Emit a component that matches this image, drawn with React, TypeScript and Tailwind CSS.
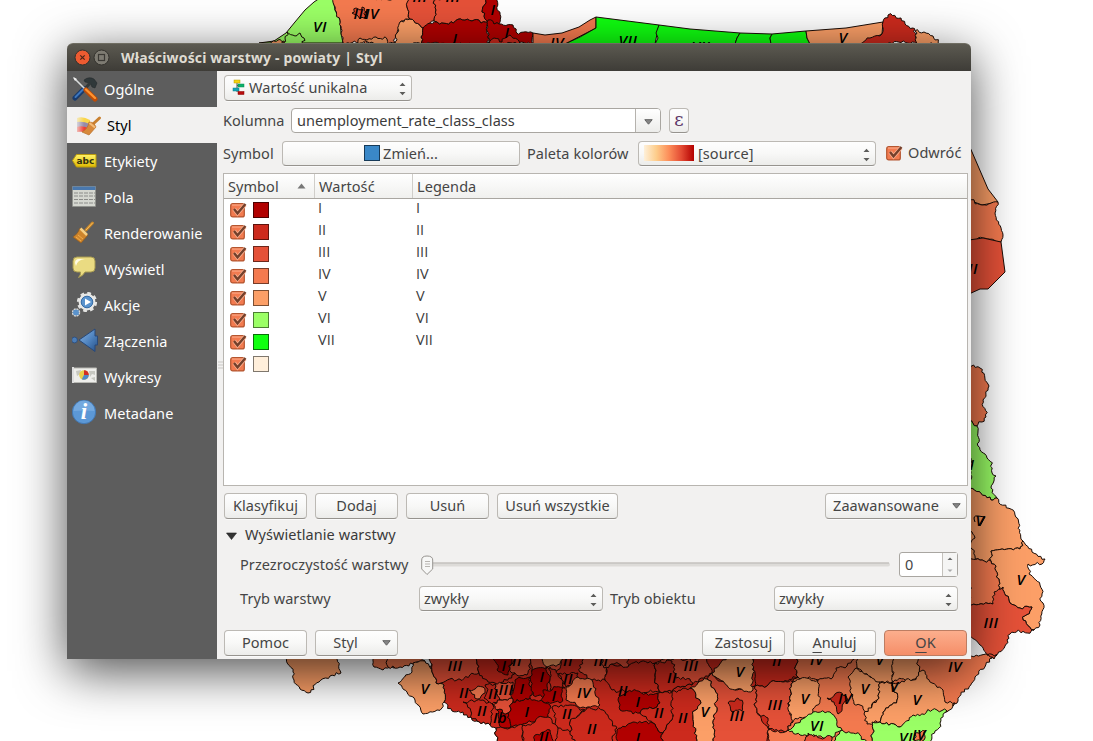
import React from "react";

type Pt = [number, number];

const C = {
  I: "#b10000",
  II: "#cc2a1d",
  III: "#e55138",
  IV: "#f47a4f",
  V: "#fc9f67",
  VI: "#9bff66",
  VII: "#0fff0f",
};
type Cls = keyof typeof C;

// [class, outline, smooth edges]
const regions: [Cls, string, boolean?][] = [
  ["VI", "259,43 274,41 286,33 295,22 305,10 314,2 320,-2 333,-2 335,10 340,20 341,33 343,43", true],
  ["V", "270,44 278,40 284,41 287,44"],
  ["VI", "284,46 287,32 295,36 300,33 304,38 302,46"],
  ["IV", "333,-2 411,-2 407,7 410,19 400,22 395,43 343,43 341,33 340,20 335,10"],
  ["III", "352,13 356,8 360,10 362,7 366,12 364,18 358,16"],
  ["V", "358,44 360,38 367,40 376,37 387,39 388,44"],
  ["V", "397,33 401,21 410,19 414,21 423,28 421,44 395,44"],
  ["III", "410,-2 433,-2 436,10 434,21 423,28 414,21 410,19 407,7"],
  ["III", "433,-2 487,-2 482,12 488,22 472,21 437,22 434,21 436,10"],
  ["I", "423,28 430,23 437,22 472,21 488,22 488,44 421,44"],
  ["I", "487,-2 498,-2 499,24 488,22 482,12"],
  ["I", "488,20 499,24 513,25 516,32 533,33 533,44 488,44"],
  ["II", "489,44 494,38 502,42 510,35 519,41 520,44"],
  ["IV", "533,33 545,35 562,33 579,27 590,20 596,17 596,28 565,44 533,44", true],
  ["VII", "565,44 580,37 596,28 596,17 659,25 657,34 655,44", true],
  ["VII", "659,25 690,29 740,33 737,38 735,44 655,44 658,38 656,33", true],
  ["VII", "740,33 772,34 770,38 771,44 735,44 737,38", true],
  ["VII", "772,34 806,31 807,38 810,44 771,44 770,38", true],
  ["V", "806,31 846,28 883,22 882,34 862,44 810,44 807,38", true],
  ["II", "883,22 888,15 901,18 905,24 915,29 917,44 860,44 870,38 882,34"],
  ["V", "915,31 924,32 933,36 940,44 917,44"],

  ["V", "969,145 988,189 998,202 982,205 969,200", true],
  ["IV", "969,200 982,205 998,202 995,213 1003,235 1001,242 983,238 969,240"],
  ["III", "969,240 983,238 1001,242 1005,272 988,289 980,289 969,294", true],
  ["IV", "969,364 980,368 989,386 983,400 986,417 977,426 969,420"],
  ["VI", "969,420 977,426 978,431 978,446 987,458 996,476 991,488 997,498 991,500 969,486"],
  ["V", "969,486 991,500 997,498 1015,515 1023,541 1020,549 991,551 991,561 969,559"],
  ["V", "965,530 972,532 975,538 971,542 972,549 978,560 965,560"],
  ["V", "1023,541 1032,552 1045,559 1042,564 1028,564 1029,574 1040,585 1043,603 1040,625 1034,630 1023,620 1032,607 1020,608 1010,603 1003,587 999,590 996,566 991,561 991,551 1020,549"],
  ["IV", "969,559 991,561 996,566 999,590 993,604 969,604"],
  ["III", "969,604 993,604 994,592 1003,587 1010,603 1020,608 1032,607 1023,620 1034,630 1010,634 1005,646 992,658 980,645 969,635"],

  ["V", "284,655 335,655 341,673 330,676 319,682 308,693 300,689 294,680 293,672"],
  ["IV", "372,655 408,655 405,666 390,667 383,670 374,667"],
  ["II", "432,655 610,655 795,655 798,677 793,682 788,703 793,722 785,732 770,745 497,745 496,728 490,725 477,721 472,720 463,712 452,711 444,702 444,685 436,683 432,672"],
  ["IV", "385,655 420,655 425,661 413,664 400,667 388,667"],
  ["V", "412,672 413,663 425,661 432,672 436,683 444,685 444,702 442,708 437,710 423,714 415,700 407,692 398,683"],
  ["III", "430,655 477,655 479,673 457,680 436,683 432,672"],
  ["II", "479,673 477,655 526,655 520,670 512,675 500,685 488,682"],
  ["I", "495,655 512,655 508,675 497,670"],
  ["III", "512,655 533,655 527,675 519,676 512,673"],
  ["IV", "469,690 483,687 485,693 477,699 472,694"],
  ["II", "485,685 495,684 500,700 492,704 484,698 487,692"],
  ["III", "495,684 513,682 512,698 500,700"],
  ["II", "463,702 483,700 493,705 490,725 477,721"],
  ["III", "493,705 500,700 512,698 513,702 508,713 497,710"],
  ["I", "497,710 508,713 510,728 502,728"],
  ["I", "515,680 530,677 532,695 530,698 513,702 512,698"],
  ["III", "530,655 565,655 556,672 547,667 532,672"],
  ["V", "540,655 565,655 560,664 547,667"],
  ["I", "532,670 547,667 550,680 545,697 533,695 530,677"],
  ["II", "550,667 558,674 565,688 550,690 550,680"],
  ["I", "543,690 563,687 560,703 543,702"],
  ["I", "513,702 530,698 543,702 550,705 548,717 527,723 510,728 508,713"],
  ["II", "558,674 578,673 578,680 566,687"],
  ["III", "583,655 608,655 605,680 592,680 580,672"],
  ["IV", "566,687 578,677 592,680 600,705 583,707 566,700"],
  ["II", "552,707 570,705 585,710 570,722 570,732 558,728"],
  ["II", "570,722 587,708 603,710 617,728 610,745 575,745 570,732"],
  ["II", "496,728 510,728 523,725 522,745 497,745"],
  ["II", "523,725 548,717 558,728 556,745 523,745"],
  ["I", "535,735 550,730 552,745 533,745"],
  ["II", "605,680 608,664 655,663 655,680 660,692 627,692 612,690"],
  ["III", "600,655 628,655 628,667 614,664 604,668"],
  ["III", "655,663 707,655 712,673 692,685 660,692 655,680"],
  ["II", "655,663 672,661 676,678 690,679 692,685 660,692 655,680"],
  ["I", "618,700 627,692 658,693 660,703 640,713 620,710"],
  ["II", "640,713 660,703 658,693 672,692 677,700 672,720 663,733 653,723"],
  ["II", "672,692 690,688 700,700 693,717 697,745 662,745 663,733 672,720"],
  ["I", "617,730 633,722 653,723 663,733 662,745 617,745"],
  ["III", "707,679 712,673 735,690 755,686 757,713 768,728 767,745 710,745 717,710 715,690"],
  ["V", "690,688 707,679 715,690 717,710 710,745 697,745 693,717 700,700"],
  ["V", "712,673 728,655 753,655 753,690 735,690 717,678"],
  ["II", "728,703 738,698 743,703 742,711 731,711"],
  ["II", "754,655 795,655 798,677 783,682 755,686"],
  ["III", "755,686 783,682 793,682 788,703 793,722 785,732 768,728 768,718 757,713"],
  ["IV", "795,655 990,655 992,658 975,677 958,701 948,711 900,727 872,722 873,745 768,745 768,730 785,732 793,722 788,703 793,682 798,677"],
  ["IV", "798,677 818,680 833,677 836,668 847,666 857,655 795,655"],
  ["V", "793,682 800,679 818,680 820,700 813,712 792,723 788,703"],
  ["V", "848,677 857,668 880,683 877,700 867,715 860,705 854,704"],
  ["V", "857,655 895,655 892,683 878,682 857,668"],
  ["V", "895,655 920,655 917,678 893,682 892,668"],
  ["V", "880,683 893,683 897,700 883,712 880,722 867,724 864,714 877,700"],
  ["V", "880,722 883,712 897,700 893,683 913,680 923,670 932,683 943,690 945,702 955,703 948,711 927,716 900,727"],
  ["II", "827,698 842,693 848,700 838,714 834,702"],
  ["VI", "788,730 813,712 830,712 842,730 830,737 800,735"],
  ["III", "803,745 808,733 820,738 832,737 830,745"],
  ["VI", "830,745 842,730 860,735 868,745"],
  ["VI", "872,722 880,722 900,727 913,715 937,710 947,711 935,731 929,745 873,745"],
  ["IV", "915,734 925,731 924,740 914,741"],
  ["III", "987,655 997,655 994,659 990,657"],
];

const labels: [string, number, number][] = [
  ["VI", 320, 27], ["III", 361, 14], ["IV", 372, 14], ["III", 420, -3], ["III", 453, -3], ["I", 455, 39], ["I", 493, 10], ["I", 507, 33],
  ["IV", 557, 43], ["VII", 628, 41], ["VII", 701, 47], ["V", 843, 38], ["II", 973, 269], ["I", 972, 465], ["V", 980, 521],
  ["V", 1021, 580], ["III", 991, 623], ["IV", 955, 667], ["V", 425, 689], ["III", 455, 666], ["I", 504, 666], ["II", 517, 661], ["II", 464, 693],
  ["II", 493, 694], ["III", 506, 690], ["II", 482, 711], ["Ib", 500, 718], ["I", 522, 689], ["I", 542, 677], ["I", 554, 696], ["I", 527, 712],
  ["II", 568, 679], ["IV", 584, 693], ["III", 601, 661], ["II", 567, 714], ["II", 592, 729], ["II", 544, 737], ["II", 623, 691], ["I", 638, 702],
  ["II", 659, 713], ["II", 683, 718], ["I", 638, 738], ["III", 691, 666], ["II", 672, 678], ["V", 740, 672], ["V", 705, 712], ["III", 737, 716],
  ["III", 775, 705], ["II", 777, 661], ["IV", 817, 660], ["V", 805, 699], ["IV", 845, 699], ["V", 865, 689], ["V", 880, 660], ["V", 894, 687],
  ["V", 917, 700], ["VI", 817, 726], ["VI", 906, 738], ["IV", 919, 735], ["II", 568, 661],
];

function hash(n: number) {
  const s = Math.sin(n * 12.9898) * 43758.5453;
  return s - Math.floor(s);
}

// Roughens an edge; the result is the same whichever end it starts from.
function edge(a: Pt, b: Pt): Pt[] {
  const flip = a[0] > b[0] || (a[0] === b[0] && a[1] > b[1]);
  const [p, q] = flip ? [b, a] : [a, b];
  const dx = q[0] - p[0];
  const dy = q[1] - p[1];
  const len = Math.hypot(dx, dy);
  const seed = p[0] * 3.1 + p[1] * 7.7 + q[0] * 1.3 + q[1] * 5.9;
  const n = Math.max(1, Math.round(len / 2.3));
  const wave = (hash(seed) - 0.5) * Math.min(5, len * 0.16);
  const out: Pt[] = [];
  for (let i = 1; i < n; i++) {
    const k = (hash(seed + i) - 0.5) * 2.8 + wave * Math.sin((i / n) * Math.PI * 2);
    out.push([p[0] + (dx * i) / n - (dy / len) * k, p[1] + (dy * i) / n + (dx / len) * k]);
  }
  return flip ? out.reverse() : out;
}

function outline(src: string, smooth?: boolean) {
  const pts = src.split(" ").map((s) => s.split(",").map(Number) as Pt);
  if (smooth) return pts.map((p) => p.join(",")).join(" ");
  return pts
    .flatMap((p, i) => [p, ...edge(p, pts[(i + 1) % pts.length])])
    .map((p) => p[0].toFixed(1) + "," + p[1].toFixed(1))
    .join(" ");
}

function MapBackdrop() {
  return (
    <svg className="block h-[741px] w-[1093px]" viewBox="0 0 1093 741">
      {regions.map(([c, p, smooth], i) => (
        <polygon key={i} points={outline(p, smooth)} fill={C[c]} stroke="#1a0c06" strokeWidth="1" strokeLinejoin="round" />
      ))}
      <path d="M975 522Q972 515 978 516L985 517L980 526" fill="none" stroke="#000" />
      <g fontFamily="'Open Sans', sans-serif" fontStyle="italic" fontWeight="600" fontSize="15" letterSpacing=".5" textAnchor="middle" fill="#000">
        {labels.map(([t, x, y], i) => (
          <text key={i} x={x} y={y + 5}>{t}</text>
        ))}
      </g>
    </svg>
  );
}

const ic = "h-[26px] w-[28px] shrink-0";

const ToolsIcon = () => (
  <svg className={ic} viewBox="0 0 28 26">
    <path d="M12 4Q17 0 22 3L25 7 23 12 20 11 18 7 13 6Z" fill="#30383a" stroke="#1e2426" strokeWidth=".5" />
    <path d="M18 7L12 14" stroke="#33393a" strokeWidth="3" />
    <path d="M3 22L12 13" stroke="#183a6c" strokeWidth="5" strokeLinecap="round" />
    <path d="M3.500 21L11 13.500" stroke="#3d76bd" strokeWidth="2" strokeLinecap="round" />
    <path d="M2 2L14 14" stroke="#d9dcdc" strokeWidth="1.600" />
    <path d="M1 1L5 3 3 5Z" fill="#f2f2f2" />
    <path d="M14 14L23 23" stroke="#bd4c08" strokeWidth="5" strokeLinecap="round" />
    <path d="M14 13.500L23 22" stroke="#ff942f" strokeWidth="2.400" strokeLinecap="round" />
  </svg>
);
const StyleIcon = () => (
  <svg className={ic} viewBox="0 0 28 26">
    <defs>
      <linearGradient id="fade" x1="0" y1="0" x2="1" y2="0">
        <stop offset="0" stopColor="#fff" stopOpacity=".2" />
        <stop offset=".5" stopColor="#fff" />
      </linearGradient>
      <mask id="flag">
        <rect x="1" y="2" width="16" height="22" fill="url(#fade)" />
      </mask>
    </defs>
    <g mask="url(#flag)">
      <path d="M2 6Q8 4 15 8V12H2Z" fill="#f9d64a" />
      <path d="M2 10Q8 9 15 12V16H2Z" fill="#968ba9" />
      <path d="M2 15Q8 13 15 17L13 21Q7 19 2 20Z" fill="#ee4034" />
    </g>
    <path d="M24.500 6L18 12" stroke="#c9802f" strokeWidth="3" strokeLinecap="round" />
    <path d="M14 10Q19 10 21 15L14 23 7 20Q13 17 14 10Z" fill="#d8893b" stroke="#b8702a" strokeWidth=".7" />
    <path d="M14.500 11L20 15.500" stroke="#f4bc78" strokeWidth="2" />
  </svg>
);
const LabelIcon = () => (
  <svg className={ic} viewBox="0 0 28 26">
    <defs>
      <linearGradient id="lab" x1="0" y1="0" x2="0" y2="1">
        <stop offset="0" stopColor="#fff269" />
        <stop offset="1" stopColor="#dfba00" />
      </linearGradient>
    </defs>
    <path d="M.5 12.500L4.500 6.500H24V19H4.500Z" fill="url(#lab)" stroke="#b99a10" />
    <text x="13.500" y="15.500" textAnchor="middle" fontFamily="'DejaVu Sans', sans-serif" fontWeight="700" fontSize="9" fill="#33300e">abc</text>
  </svg>
);
const TableIcon = () => (
  <svg className={ic} viewBox="0 0 28 26">
    <path d="M.5 2.500H23.500V22.500H.5Z" fill="#d5d7d0" stroke="#8d8f8a" strokeWidth=".6" />
    <path d="M.5 2.500H23.500V6H.5Z" fill="#4978ae" />
    <path d="M2 9H23M2 12H23M2 15.500H23M2 19H23" stroke="#8b8c89" strokeWidth="1" strokeDasharray="4 1" />
  </svg>
);
const BrushIcon = () => (
  <svg className={ic} viewBox="0 0 28 26">
    <path d="M20.500 3L14 10" stroke="#c3842a" strokeWidth="3" strokeLinecap="round" />
    <path d="M20.500 3L14 10" stroke="#ffc260" strokeWidth="1" strokeLinecap="round" />
    <path d="M8 8L16 15 9 23 1 17Q6 14 8 8Z" fill="#cf852b" stroke="#925b1c" strokeWidth=".7" />
    <path d="M8.500 8.500L15 15" stroke="#f7cf83" strokeWidth="2.500" />
    <path d="M4 17L9 21M6 15L11 19" stroke="#f2ac4a" strokeWidth="1" />
  </svg>
);
const BubbleIcon = () => (
  <svg className={ic} viewBox="0 0 28 26">
    <path d="M5 1H19Q23 1 23 5V12Q23 16 19 16H13Q11 20 6.500 21.500 9 19 8.500 16H5Q1 16 1 12V5Q1 1 5 1Z" fill="#eadb82" stroke="#a59850" />
    <path d="M3 7Q3 3 7 3H13Q5 4 4 10Z" fill="#fffbe4" />
  </svg>
);
const GearIcon = () => (
  <svg className={ic} viewBox="0 0 28 26">
    <circle cx="15" cy="10" r="8.800" fill="none" stroke="#e4e4e2" strokeWidth="2.600" strokeDasharray="3.700 3.211" />
    <circle cx="15" cy="10" r="7.200" fill="#5a93cd" stroke="#e8e8e6" strokeWidth="2.400" />
    <circle cx="15" cy="10" r="5.800" fill="none" stroke="#386da5" strokeWidth="1" />
    <path d="M13 6.500L19 10 13 13.500Z" fill="#fff" />
    <circle cx="4" cy="20.500" r="3.500" fill="#4e83bd" stroke="#d4d4d2" strokeWidth="1.500" strokeDasharray="2 .75" />
    <circle cx="4" cy="20.500" r="2.600" fill="#5a93cd" />
  </svg>
);
const JoinIcon = () => (
  <svg className={ic} viewBox="0 0 28 26">
    <defs>
      <linearGradient id="join" x1="0" y1="0" x2="1" y2="1">
        <stop offset="0" stopColor="#8cb5e2" />
        <stop offset=".5" stopColor="#5387c2" />
        <stop offset="1" stopColor="#244f87" />
      </linearGradient>
    </defs>
    <path d="M7 12L23 1V8H25.500V17H23V23.500Z" fill="url(#join)" stroke="#28497a" />
    <circle cx="2.500" cy="12" r="2.900" fill="#4c7eb8" stroke="#28497a" strokeWidth=".8" />
  </svg>
);
const ChartIcon = () => (
  <svg className={ic} viewBox="0 0 28 26">
    <path d="M1 4H24.500V18.500H1Z" fill="#eeeeeb" stroke="#b9b9b4" />
    <path d="M1 3V19" stroke="#ddd" strokeWidth="2" />
    <path d="M4 7L9 6 8 10 5 12ZM17 7H23V11L20 10 18 13ZM19 14L23 13V17Z" fill="#c7c8c1" />
    <circle cx="12" cy="11" r="4.800" fill="#e9cf4a" />
    <path d="M12 11V6.200A4.800 4.800 0 0 1 16.800 11Z" fill="#d22e25" />
    <path d="M12 11H16.800A4.800 4.800 0 0 1 9.800 15.300Z" fill="#4f88c7" />
  </svg>
);
const InfoIcon = () => (
  <svg className={ic} viewBox="0 0 28 26">
    <circle cx="12" cy="12" r="11.700" fill="#5c98d6" stroke="#4377b0" />
    <path d="M1.500 11A10.500 10.500 0 0 1 22.500 11Q12.500 10 1.500 11Z" fill="#74a9df" />
    <text x="12" y="19" textAnchor="middle" fontFamily="'Liberation Serif', serif" fontWeight="700" fontStyle="italic" fontSize="23" fill="#fff">i</text>
  </svg>
);

const nav = [
  { name: "Ogólne", icon: <ToolsIcon /> },
  { name: "Styl", icon: <StyleIcon /> },
  { name: "Etykiety", icon: <LabelIcon /> },
  { name: "Pola", icon: <TableIcon /> },
  { name: "Renderowanie", icon: <BrushIcon /> },
  { name: "Wyświetl", icon: <BubbleIcon /> },
  { name: "Akcje", icon: <GearIcon /> },
  { name: "Złączenia", icon: <JoinIcon /> },
  { name: "Wykresy", icon: <ChartIcon /> },
  { name: "Metadane", icon: <InfoIcon /> },
];

const Spin = () => (
  <svg className="h-[14px] w-[7px] shrink-0" viewBox="0 0 7 14">
    <path d="M.5 4L3.500 .800 6.500 4ZM.5 10L3.500 13.200 6.500 10Z" fill="#5c5c5a" />
  </svg>
);
const Down = () => (
  <svg className="mt-[3px] h-[6px] w-[9px] shrink-0" viewBox="0 0 9 6">
    <path d="M.8 .7H8.200L4.500 5.200Z" fill="#858585" stroke="#626262" />
  </svg>
);

const Check = () => (
  <svg className="h-[17px] w-[17px] shrink-0" viewBox="0 0 17 17">
    <rect x=".7" y="1.700" width="13.600" height="13.200" rx="2" fill="#f27b50" stroke="#b4552f" strokeWidth="1.200" />
    <path d="M2 3H13" stroke="#ffb08f" />
    <path d="M4.200 7L7.500 11.300 15 2.800" fill="none" stroke="#f8b192" strokeWidth="4" />
    <path d="M4 7L7.500 11.300 15.500 2" fill="none" stroke="#74402b" strokeWidth="2.400" />
  </svg>
);

const face =
  "flex h-[25.500px] shrink-0 items-center rounded-[4px] border border-[#bcb9b4] border-b-[#96938e] bg-linear-to-b from-[#fefefe] via-[#f8f8f7] to-[#ececea] pb-[2px] shadow-[0_1px_0_#fafafa]";

function Btn({ children, className = "" }: { children: React.ReactNode; className?: string }) {
  return <button className={face + " justify-center " + className}>{children}</button>;
}

function Combo({ children, className = "" }: { children: React.ReactNode; className?: string }) {
  return (
    <div className={face + " justify-between pr-[5px] pl-[4px] " + className}>
      <span className="flex items-center">{children}</span>
      <span className="mt-[5px]"><Spin /></span>
    </div>
  );
}

const rows = [
  ["I", "bg-[#b10000] border-[#4c0000]"],
  ["II", "bg-[#cc2a1d] border-[#5e130d]"],
  ["III", "bg-[#e55138] border-[#6d271b]"],
  ["IV", "bg-[#f47a4f] border-[#773c28]"],
  ["V", "bg-[#fc9f67] border-[#7c4f33]"],
  ["VI", "bg-[#9bff66] border-[#4c7e33]"],
  ["VII", "bg-[#0fff0f] border-[#087008]"],
  ["", "bg-[#ffefdb] border-[#7f776d]"],
];

export default function App() {
  return (
    <div className="relative h-[741px] w-[1093px] overflow-hidden bg-white font-['Noto_Sans',sans-serif] text-[14.500px] leading-5 tracking-[0.060px] whitespace-nowrap text-[#454545]">
      <MapBackdrop />
      <div className="absolute top-[43px] left-[67px] flex h-[616px] w-[904px] flex-col rounded-t-[6px] bg-[#f2f1f0] shadow-[0_12px_50px_rgba(0,0,0,0.700)]">
        <header className="flex h-[28px] shrink-0 items-center rounded-t-[6px] border-t border-[#6f6d62] bg-linear-to-b from-[#5c5a51] to-[#3e3c37] pl-[7px]">
          <svg className="h-[18px] w-[36px]" viewBox="0 0 36 18">
            <circle cx="8.500" cy="8.500" r="7.500" fill="#ed5b31" stroke="#33312c" />
            <path d="M6.300 6.300L10.700 10.700M10.700 6.300L6.300 10.700" stroke="#4c2518" strokeWidth="1.200" />
            <circle cx="27.500" cy="8.500" r="7.500" fill="#7e7b72" stroke="#33312c" />
            <rect x="24.500" y="5.500" width="6" height="6" fill="none" stroke="#3b3934" strokeWidth="1.200" />
          </svg>
          <h1 className="ml-[11px] text-[14px] font-bold tracking-[0.160px] text-[#dfdbd2]">Właściwości warstwy - powiaty | Styl</h1>
        </header>
        <div className="flex min-h-0 flex-1">
          <nav className="w-[150px] shrink-0 bg-[#5d5d5d]">
            {nav.map((n, i) => (
              <div
                key={n.name}
                className={
                  "flex h-[36px] items-center gap-[4px] " +
                  (i === 1 ? "bg-[#f2f1f0] pl-[8px] text-black" : "pl-[5px] text-white")
                }
              >
                {n.icon}
                <span>{n.name}</span>
              </div>
            ))}
          </nav>
          <div className="flex w-[6px] shrink-0 items-center justify-center">
            <svg className="h-[8px] w-[5px]" viewBox="0 0 5 8">
              <path d="M0 1H5M0 4H5M0 7H5" stroke="#c9c7c4" />
            </svg>
          </div>
          <main className="flex w-[745px] flex-col pt-[4px]">
            <div className="flex h-[25px] pl-[1px]">
              <Combo className="w-[188px]">
                <svg className="mr-[3px] ml-[3px] h-[16px] w-[14px]" viewBox="0 0 14 16">
                  <path d="M5 3V13M5 6.500H9" stroke="#555" strokeWidth="1" />
                  <rect x="2" y="1" width="6" height="3" fill="#f5d411" stroke="#b89b00" strokeWidth=".5" />
                  <rect x="6" y="5" width="6" height="3" fill="#0bb06a" stroke="#068a50" strokeWidth=".5" />
                  <rect x="1" y="9" width="6" height="3" fill="#15a3b4" stroke="#0b7f8c" strokeWidth=".5" />
                  <rect x="6" y="12.500" width="6" height="3" fill="#b80d0d" stroke="#800" strokeWidth=".5" />
                </svg>
                Wartość unikalna
              </Combo>
            </div>
            <div className="mt-[8px] flex h-[25px] items-center">
              <span className="w-[68px] pb-[2px]">Kolumna</span>
              <div className="flex h-[25px] w-[370px] rounded-[4px] border border-[#a9a6a1] bg-white">
                <span className="flex w-[343px] items-center pb-[2px] pl-[5px] text-[#3c3c3c]">unemployment_rate_class_class</span>
                <span className="flex flex-1 items-center justify-center rounded-r-[3px] border-l border-[#b5b2ad] bg-linear-to-b from-white to-[#ececea]">
                  <Down />
                </span>
              </div>
              <Btn className="ml-[8px] w-[20px] font-['DejaVu_Serif',serif] text-[18px] text-[#5c3566]">ε</Btn>
            </div>
            <div className="mt-[8px] flex h-[25px] items-center">
              <span className="w-[59px] pb-[2px]">Symbol</span>
              <Btn className="w-[238px]">
                <span className="mr-[3px] h-[16px] w-[16px] border border-[#173a58] bg-[#3a88c8]" />
                Zmień...
              </Btn>
              <span className="ml-[7px] w-[111px] pb-[2px]">Paleta kolorów</span>
              <Combo className="w-[238px]">
                <span className="mr-[4px] ml-[1px] h-[16px] w-[50px] bg-[linear-gradient(to_right,#fef0d9,#fdcc8a_25%,#fc8d59_50%,#e34a33_75%,#b30000)]" />
                [source]
              </Combo>
              <span className="ml-[10px] flex items-center gap-[5px]">
                <Check />
                <span className="pb-[3px]">Odwróć</span>
              </span>
            </div>
            <section className="mt-[7px] flex h-[313px] shrink-0 flex-col border border-[#b8b5b0] bg-white">
              <div className="flex h-[25px] shrink-0 items-center border-b border-[#a9a6a1] bg-linear-to-b from-white to-[#f0f0ee]">
                <div className="flex h-full w-[91px] items-center justify-between border-r border-[#d0ceca] pr-[8px] pl-[4px]">
                  Symbol
                  <svg className="h-[6px] w-[9px]" viewBox="0 0 9 6">
                    <path d="M.5 5.500L4.500 .5 8.500 5.500Z" fill="#777" />
                  </svg>
                </div>
                <div className="flex h-full w-[98px] items-center border-r border-[#d0ceca] pl-[4px]">Wartość</div>
                <div className="pl-[4px]">Legenda</div>
              </div>
              {rows.map(([t, sw], i) => (
                <div key={i} className="flex h-[22px] shrink-0 items-center pl-[6px] text-[#3c3c3c]">
                  <Check />
                  <span className={"ml-[6px] h-[16px] w-[16px] border " + sw} />
                  <span className="ml-[49px] w-[98px] pb-[4px] font-['Open_Sans',sans-serif]">{t}</span>
                  <span className="pb-[4px] font-['Open_Sans',sans-serif]">{t}</span>
                </div>
              ))}
            </section>
            <div className="mt-[7px] flex h-[25px] gap-[8px] pl-[1px]">
              <Btn className="w-[83px]">Klasyfikuj</Btn>
              <Btn className="w-[83px]">Dodaj</Btn>
              <Btn className="w-[83px]">Usuń</Btn>
              <Btn className="w-[121px]">Usuń wszystkie</Btn>
              <Btn className="mr-[1px] ml-auto w-[142px] gap-[13px] pl-[2px]">
                Zaawansowane <Down />
              </Btn>
            </div>
            <div className="flex h-[34px] items-center gap-[8px] pl-[3px] text-[#3a3a3a]">
              <svg className="mt-[2px] h-[8px] w-[11px]" viewBox="0 0 11 8">
                <path d="M.5 1H10.500L5.500 7.500Z" fill="#333" stroke="#222" strokeWidth=".6" />
              </svg>
              <span className="pb-[2px]">Wyświetlanie warstwy</span>
            </div>
            <div className="flex h-[25px] items-center pl-[17px]">
              <span className="w-[181px] pb-[2px]">Przezroczystość warstwy</span>
              <svg className="h-[24px] w-[469px]" viewBox="0 0 469 24">
                <rect x="2" y="9.500" width="467" height="4" rx="2" fill="#dddbd8" />
                <path d="M2 10H468" stroke="#b8b5b1" />
                <path d="M.7 7Q.7 3 6 3 11.700 3 11.700 7V16L6 21.500 .7 16Z" fill="#f7f7f6" stroke="#979490" />
                <path d="M4 8.500H9M4 11H9M4 13.500H9" stroke="#b8b5b1" />
              </svg>
              <div className="ml-[9px] flex h-[25px] w-[59px] rounded-[3px] border border-[#a9a6a1] bg-white">
                <span className="w-[42px] pt-[1px] pl-[5px]">0</span>
                <span className="flex flex-1 items-center justify-center border-l border-[#c4c1bc] bg-[#f5f5f4]">
                  <svg className="h-[16px] w-[6px]" viewBox="0 0 6 16">
                    <path d="M.5 3L3 .500 5.500 3Z" fill="#666" />
                    <path d="M.5 12.500L3 15 5.500 12.500Z" fill="#aaa" />
                  </svg>
                </span>
              </div>
            </div>
            <div className="mt-[9px] flex h-[25px] items-center pl-[17px]">
              <span className="w-[179px] pb-[2px]">Tryb warstwy</span>
              <Combo className="w-[184px]">zwykły</Combo>
              <span className="ml-[7px] w-[164px] pb-[2px]">Tryb obiektu</span>
              <Combo className="w-[184px]">zwykły</Combo>
            </div>
            <div className="mt-[19px] flex h-[25px] gap-[8px] pr-[1px] pl-[1px]">
              <Btn className="w-[83px]">Pomoc</Btn>
              <Btn className="w-[83px] gap-[24px] pl-[11px]">
                Styl <Down />
              </Btn>
              <Btn className="ml-auto w-[83px]">Zastosuj</Btn>
              <Btn className="w-[83px]">
                <span><u className="underline-offset-4">A</u>nuluj</span>
              </Btn>
              <button className="flex h-[25.500px] w-[83px] items-center justify-center rounded-[4px] border border-[#bd7d62] bg-linear-to-b from-[#fcae8d] to-[#f58e68] pb-[2px]">
                <span><u className="underline-offset-4">O</u>K</span>
              </button>
            </div>
          </main>
        </div>
      </div>
    </div>
  );
}
